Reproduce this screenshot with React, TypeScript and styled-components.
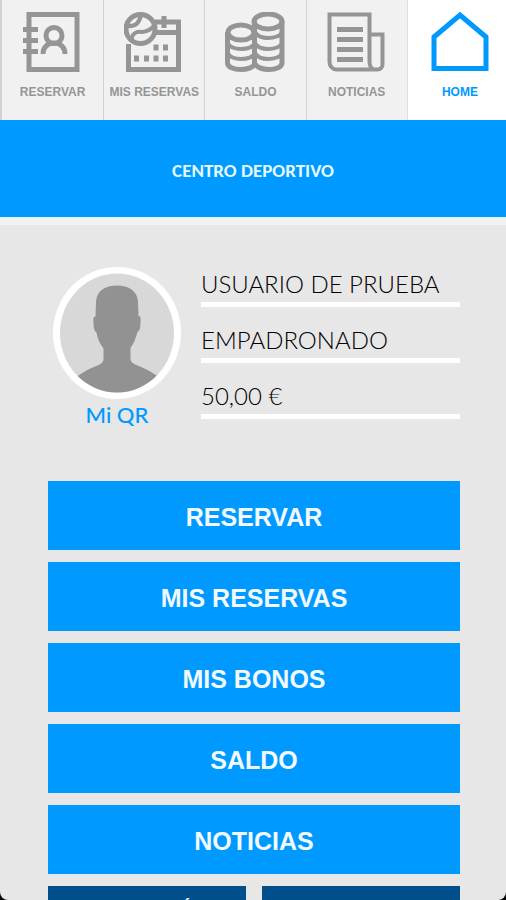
import React from "react";
import styled, { createGlobalStyle } from "styled-components";

const BLUE = "#0099ff";
const GREY = "#949696";

const GlobalStyle = createGlobalStyle`
  * { box-sizing: border-box; }
  body { margin: 0; background: #000; }
`;

const Screen = styled.div`
  display: flex;
  flex-direction: column;
  height: 100vh;
  overflow: hidden;
  background: #e7e7e7;
  border-radius: 0 0 8px 8px;
  font-family: "Liberation Sans", Arial, sans-serif;
`;

const TabBar = styled.nav`
  display: grid;
  grid-template-columns: repeat(4, 101fr) 99fr;
  flex: none;
  height: 120px;
  border-left: 2px solid #d2d2d2;
`;

const Tab = styled.a<{ $active?: boolean }>`
  display: flex;
  flex-direction: column;
  align-items: center;
  gap: 13px;
  min-width: 0;
  padding-top: 12px;
  padding-left: ${(p) => (p.$active ? "6px" : "0")};
  background: ${(p) => (p.$active ? "#fff" : "#f1f1f1")};
  border-left: 1px solid ${(p) => (p.$active ? "#dedede" : "#d2d2d2")};
  color: ${(p) => (p.$active ? BLUE : GREY)};
  font-size: 12px;
  font-weight: 700;
  line-height: 14px;
  text-decoration: none;
  white-space: nowrap;

  &:first-child {
    border-left: 0;
  }
`;

const TabIcon = styled.svg`
  display: block;
  width: 60px;
  height: 60px;
  fill: none;
  stroke: currentColor;
  stroke-width: 5;
`;

const TitleBar = styled.header`
  display: flex;
  flex: none;
  align-items: center;
  justify-content: center;
  height: 105px;
  padding-top: 4px;
  background: ${BLUE};
  border-bottom: 8px solid #f1f3f3;
`;

const Title = styled.h1`
  margin: 0;
  color: #e6faff;
  font-family: Carlito, Lato, sans-serif;
  font-size: 19px;
  font-weight: 700;
  line-height: 24px;
`;

const Content = styled.main`
  display: flex;
  flex-direction: column;
  flex: none;
  gap: 50px;
  padding: 42px 46px 0 48px;
`;

const Profile = styled.section`
  display: flex;
  gap: 20px;
  padding-left: 5px;
  font-family: Lato, Carlito, sans-serif;
`;

const Identity = styled.div`
  display: flex;
  flex: none;
  flex-direction: column;
  align-items: center;
  width: 128px;
`;

const Avatar = styled.svg`
  display: block;
  width: 128px;
  height: 132px;
`;

const QrLink = styled.a`
  color: ${BLUE};
  font-size: 22px;
  font-weight: 500;
  line-height: 32px;
  text-decoration: none;
`;

const Details = styled.div`
  flex: 1;
  min-width: 0;
`;

const Detail = styled.p`
  display: flex;
  align-items: flex-end;
  height: 56px;
  margin: 0;
  padding-bottom: 2px;
  border-bottom: 5px solid #fff;
  color: #000;
  font-size: 24px;
  font-weight: 300;
  line-height: 32px;
  white-space: nowrap;

  &:first-child {
    height: 40px;
  }
`;

const Menu = styled.div`
  display: grid;
  grid-template-columns: 1fr 1fr;
  gap: 12px 16px;
`;

const MenuButton = styled.button`
  grid-column: 1 / -1;
  height: 69px;
  padding: 2px 0 0;
  border: 0;
  background: ${BLUE};
  color: #f2faff;
  font-family: inherit;
  font-size: 25px;
  font-weight: 700;
  line-height: 32px;
`;

const HalfButton = styled.button`
  display: flex;
  align-items: flex-start;
  justify-content: center;
  height: 69px;
  padding: 10px 0 0 80px;
  border: 0;
  background: #004f8a;
  color: #f2faff;
  font-family: inherit;
  font-size: 18px;
  font-weight: 700;
  line-height: 20px;
`;

const ReservarIcon = () => (
  <TabIcon viewBox="0 0 60 60">
    <rect x="6" y="2.500" width="48" height="55" />
    <path d="M0 17.500h15M0 28.500h15M0 39.500h15" />
    <circle cx="31" cy="23.500" r="8" />
    <path d="M20 42c0-6 4-11 11-11s11 5 11 11" />
  </TabIcon>
);

const MisReservasIcon = () => (
  <TabIcon viewBox="0 0 60 60">
    <path d="M4.500 32v25.500h50V10H31M31 20.500h23M40 4v12" />
    <circle cx="16.500" cy="17" r="14.500" />
    <path d="M3 14c9 1 13-4 14-12M8 29c-1-7 4-10 10-9 6 0 9-3 12-6" strokeWidth="4" />
    <path
      d="M29.500 35.500h5M39 35.500h5M10 46.500h5M20 46.500h5M29.500 46.500h5M39 46.500h5"
      strokeWidth="6"
    />
  </TabIcon>
);

const SaldoIcon = () => (
  <TabIcon viewBox="0 0 60 60">
    <ellipse cx="43" cy="9.500" rx="14" ry="7.500" />
    <ellipse cx="16" cy="20.500" rx="13" ry="7.500" />
    <path d="M2.500 20v31c0 4 6 6.500 13.500 6.500s12-2.500 14-5.500c2 3 7 5.500 14 5.500s13-2.500 13-6.500V9M29.500 9v43" />
    <path d="M3 31c1 4 7 6 13 6s12-2 14-6M3 41c1 4 7 6 13 6s12-2 14-6" strokeWidth="4" />
    <path
      d="M30 20c2 4 7 6 13 6s13-2 14-6M30 31c2 4 7 6 13 6s13-2 14-6M30 41c2 4 7 6 13 6s13-2 14-6"
      strokeWidth="4"
    />
  </TabIcon>
);

const NoticiasIcon = () => (
  <TabIcon viewBox="0 0 60 60">
    <path
      d="M42.500 50V2.500h-40V50c0 4 3 7.500 7 7.500h41c3 0 5-2 5-5V22.500h-13V50c0 4 2 7.500 5 7.500"
      strokeWidth="4"
    />
    <path d="M10 17.500h26M10 27.500h26M10 37.500h26M10 47.500h26" />
  </TabIcon>
);

const HomeIcon = () => (
  <TabIcon viewBox="0 0 60 60">
    <path d="M4 56.500V25L30 3l26 22v31.500z" />
  </TabIcon>
);

const tabs = [
  { label: "RESERVAR", Icon: ReservarIcon },
  { label: "MIS RESERVAS", Icon: MisReservasIcon },
  { label: "SALDO", Icon: SaldoIcon },
  { label: "NOTICIAS", Icon: NoticiasIcon },
  { label: "HOME", Icon: HomeIcon, active: true },
];

const details = ["USUARIO DE PRUEBA", "EMPADRONADO", "50,00 €"];
const actions = ["RESERVAR", "MIS RESERVAS", "MIS BONOS", "SALDO", "NOTICIAS"];

export default function App() {
  return (
    <>
      <GlobalStyle />
      <Screen>
        <TabBar>
          {tabs.map(({ label, Icon, active }) => (
            <Tab key={label} href="#" $active={active}>
              <Icon />
              {label}
            </Tab>
          ))}
        </TabBar>
        <TitleBar>
          <Title>CENTRO DEPORTIVO</Title>
        </TitleBar>
        <Content>
          <Profile>
            <Identity>
              <Avatar viewBox="0 0 128 132">
                <defs>
                  <clipPath id="portrait">
                    <ellipse cx="64" cy="66" rx="57" ry="59.500" />
                  </clipPath>
                </defs>
                <ellipse cx="64" cy="66" rx="64" ry="66" fill="#fff" />
                <ellipse cx="64" cy="66" rx="57" ry="59.500" fill="#d8d8d8" />
                <path
                  clipPath="url(#portrait)"
                  fill="#929292"
                  d="M64 18.500c-12 0-20 5-21 16l-.5 15c-2 0-2.500 2-2 6 0 6 1 9 3 10 1 7 4 12 7 16v10c0 4-2 5-6 7-10 4-17 8-24 14v20h88v-20c-7-6-14-10-24-14-4-2-7-3-7-7V81c3-4 5-9 7-16 2-1 3-4 3-10 .5-4 0-6-2-6l-.5-15c-1-10-9-15.500-21-15.500z"
                />
              </Avatar>
              <QrLink href="#">Mi QR</QrLink>
            </Identity>
            <Details>
              {details.map((text) => (
                <Detail key={text}>{text}</Detail>
              ))}
            </Details>
          </Profile>
          <Menu>
            {actions.map((label) => (
              <MenuButton key={label}>{label}</MenuButton>
            ))}
            <HalfButton>´</HalfButton>
            <HalfButton />
          </Menu>
        </Content>
      </Screen>
    </>
  );
}
